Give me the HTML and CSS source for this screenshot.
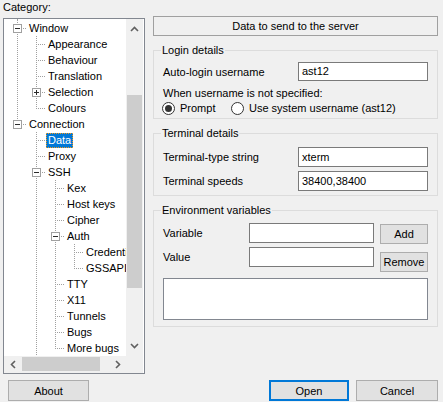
FILE: index.html
```html
<!DOCTYPE html>
<html>
<head>
<meta charset="utf-8">
<link rel="stylesheet" href="styles.css">
</head>
<body>
<div class="dialog">
  <div class="main">
    <div class="left">
      <div class="cat">Category:</div>
      <div class="tree">
        <div class="tree-top">
          <div class="rows">
            <div class="row"><span class="c t"><span class="exp minus"></span></span><span class="lbl">Window</span></div>
            <div class="row"><span class="c v"></span><span class="c t"></span><span class="lbl">Appearance</span></div>
            <div class="row"><span class="c v"></span><span class="c t"></span><span class="lbl">Behaviour</span></div>
            <div class="row"><span class="c v"></span><span class="c t"></span><span class="lbl">Translation</span></div>
            <div class="row"><span class="c v"></span><span class="c t"><span class="exp plus"></span></span><span class="lbl">Selection</span></div>
            <div class="row"><span class="c v"></span><span class="c l"></span><span class="lbl">Colours</span></div>
            <div class="row"><span class="c l"><span class="exp minus"></span></span><span class="lbl">Connection</span></div>
            <div class="row"><span class="c"></span><span class="c t"></span><span class="lbl sel">Data</span></div>
            <div class="row"><span class="c"></span><span class="c t"></span><span class="lbl">Proxy</span></div>
            <div class="row"><span class="c"></span><span class="c t"><span class="exp minus"></span></span><span class="lbl">SSH</span></div>
            <div class="row"><span class="c"></span><span class="c v"></span><span class="c t"></span><span class="lbl">Kex</span></div>
            <div class="row"><span class="c"></span><span class="c v"></span><span class="c t"></span><span class="lbl">Host keys</span></div>
            <div class="row"><span class="c"></span><span class="c v"></span><span class="c t"></span><span class="lbl">Cipher</span></div>
            <div class="row"><span class="c"></span><span class="c v"></span><span class="c t"><span class="exp minus"></span></span><span class="lbl">Auth</span></div>
            <div class="row"><span class="c"></span><span class="c v"></span><span class="c v"></span><span class="c t"></span><span class="lbl">Credentials</span></div>
            <div class="row"><span class="c"></span><span class="c v"></span><span class="c v"></span><span class="c l"></span><span class="lbl">GSSAPI</span></div>
            <div class="row"><span class="c"></span><span class="c v"></span><span class="c t"></span><span class="lbl">TTY</span></div>
            <div class="row"><span class="c"></span><span class="c v"></span><span class="c t"></span><span class="lbl">X11</span></div>
            <div class="row"><span class="c"></span><span class="c v"></span><span class="c t"></span><span class="lbl">Tunnels</span></div>
            <div class="row"><span class="c"></span><span class="c v"></span><span class="c t"></span><span class="lbl">Bugs</span></div>
            <div class="row"><span class="c"></span><span class="c v"></span><span class="c l"></span><span class="lbl">More bugs</span></div>
          </div>
          <div class="vscroll">
            <div class="sbtn"><svg width="9" height="6" viewBox="0 0 9 6"><path d="M1 5 L4.5 1.5 L8 5" fill="none" stroke="#606060" stroke-width="1.6"/></svg></div>
            <div class="vtrack"><div class="vthumb"></div></div>
            <div class="sbtn"><svg width="9" height="6" viewBox="0 0 9 6"><path d="M1 1 L4.5 4.5 L8 1" fill="none" stroke="#606060" stroke-width="1.6"/></svg></div>
          </div>
        </div>
        <div class="tree-bottom">
          <div class="hscroll">
            <div class="sbtn"><svg width="6" height="9" viewBox="0 0 6 9"><path d="M5 1 L1.5 4.5 L5 8" fill="none" stroke="#606060" stroke-width="1.6"/></svg></div>
            <div class="htrack"><div class="hthumb"></div></div>
            <div class="sbtn"><svg width="6" height="9" viewBox="0 0 6 9"><path d="M1 1 L4.5 4.5 L1 8" fill="none" stroke="#606060" stroke-width="1.6"/></svg></div>
          </div>
          <div class="corner"></div>
        </div>
      </div>
    </div>
    <div class="right">
      <div class="title">Data to send to the server</div>
      <fieldset class="group g-login">
        <legend>Login details</legend>
        <div class="frow r-auto"><span>Auto-login username</span><span class="input">ast12</span></div>
        <div class="line when">When username is not specified:</div>
        <div class="radios">
          <span class="radio r1"><span class="circ on"></span>Prompt</span>
          <span class="radio"><span class="circ"></span>Use system username (ast12)</span>
        </div>
      </fieldset>
      <fieldset class="group g-term">
        <legend>Terminal details</legend>
        <div class="frow r-t1"><span>Terminal-type string</span><span class="input h20">xterm</span></div>
        <div class="frow r-t2"><span>Terminal speeds</span><span class="input h20">38400,38400</span></div>
      </fieldset>
      <fieldset class="group g-env">
        <legend>Environment variables</legend>
        <div class="env">
          <div class="env-fields">
            <div class="frow"><span>Variable</span><span class="input h20 w125"></span></div>
            <div class="frow r-val"><span>Value</span><span class="input h20 w125"></span></div>
          </div>
          <div class="env-btns">
            <div class="btn b-add">Add</div>
            <div class="btn b-rem">Remove</div>
          </div>
        </div>
        <div class="listbox"></div>
      </fieldset>
    </div>
  </div>
  <div class="footer">
    <div class="btn b-about">About</div>
    <div class="btn b-open">Open</div>
    <div class="btn b-cancel">Cancel</div>
  </div>
</div>
</body>
</html>
```
FILE: styles.css
```css
* { box-sizing: border-box; }
html, body { margin: 0; padding: 0; }
body {
  background: #f0f0f0;
  font-family: "Liberation Sans", Arial, sans-serif;
  font-size: 11px;
  color: #000;
}
.dialog {
  width: 443px;
  height: 402px;
  display: flex;
  flex-direction: column;
  overflow: hidden;
}
.main {
  height: 380px;
  flex-shrink: 0;
  display: flex;
  padding-left: 3px;
}
.left {
  width: 142px;
  padding-top: 1px;
}
.cat {
  line-height: 13px;
  height: 13px;
}
.tree {
  margin-top: 4px;
  width: 142px;
  height: 356px;
  border: 1px solid #828790;
  background: #fff;
  display: flex;
  flex-direction: column;
}
.tree-top {
  height: 337px;
  display: flex;
}
.rows {
  width: 122px;
  overflow: hidden;
  padding: 1px 0 0 4px;
  background: repeating-linear-gradient(to bottom, #a0a0a0 0 1px, transparent 1px 2px) 13px 0 / 1px 2px no-repeat;
}
.row {
  height: 16px;
  display: flex;
  align-items: center;
  white-space: nowrap;
}
.c {
  width: 19px;
  height: 16px;
  flex-shrink: 0;
  display: flex;
  align-items: center;
  padding-left: 5px;
}
.v {
  background: repeating-linear-gradient(to bottom, #a0a0a0 0 1px, transparent 1px 2px) 9px 0 / 1px 16px no-repeat;
}
.t {
  background:
    repeating-linear-gradient(to bottom, #a0a0a0 0 1px, transparent 1px 2px) 9px 0 / 1px 16px no-repeat,
    repeating-linear-gradient(to right, #a0a0a0 0 1px, transparent 1px 2px) 11px 8px / 8px 1px no-repeat;
}
.l {
  background:
    repeating-linear-gradient(to bottom, #a0a0a0 0 1px, transparent 1px 2px) 9px 0 / 1px 9px no-repeat,
    repeating-linear-gradient(to right, #a0a0a0 0 1px, transparent 1px 2px) 11px 8px / 8px 1px no-repeat;
}
.exp {
  width: 9px;
  height: 9px;
  border: 1px solid #a0a0a0;
  background-color: #fff;
  margin-top: 1px;
}
.minus {
  background: linear-gradient(#2b2b2b, #2b2b2b) center / 5px 1px no-repeat, #fff;
}
.plus {
  background:
    linear-gradient(#2b2b2b, #2b2b2b) center / 5px 1px no-repeat,
    linear-gradient(#2b2b2b, #2b2b2b) center / 1px 5px no-repeat, #fff;
}
.lbl {
  padding: 0 2px;
  line-height: 14px;
  height: 15px;
}
.sel {
  background: #0078d7;
  color: #fff;
  outline: 1px dotted #f39a1e;
  outline-offset: -1px;
}
.vscroll {
  width: 17px;
  background: #f0f0f0;
  display: flex;
  flex-direction: column;
}
.sbtn {
  width: 17px;
  height: 17px;
  flex-shrink: 0;
  display: flex;
  align-items: center;
  justify-content: center;
}
.vscroll .sbtn:first-child { padding-top: 2px; }
.vscroll .sbtn:last-child { padding-bottom: 4px; }
.vtrack { flex: 1; }
.vthumb {
  margin: 59px 0 0 1px;
  width: 15px;
  height: 193px;
  background: #cdcdcd;
}
.tree-bottom {
  height: 17px;
  display: flex;
}
.hscroll {
  width: 122px;
  display: flex;
  background: #f0f0f0;
}
.htrack { flex: 1; }
.hthumb {
  margin: 1px 0 0 1px;
  width: 78px;
  height: 14px;
  background: #cdcdcd;
}
.corner {
  width: 17px;
  background: #f0f0f0;
}
.right {
  margin-left: 8px;
  width: 285px;
  padding-top: 16px;
}
.title {
  height: 20px;
  border: 1px solid #a0a0a0;
  text-align: center;
  line-height: 18px;
}
.group {
  margin: 8px 0 0;
  padding: 0 9px 3px;
  border: 1px solid #dcdcdc;
  min-width: 0;
}
.group legend {
  padding: 0 1px;
  margin-left: -2px;
  line-height: 13px;
  height: 13px;
}
.g-term { padding-bottom: 4px; }
.g-env { padding-bottom: 6px; }
.frow {
  display: flex;
  align-items: center;
  justify-content: space-between;
}
.r-auto { margin-top: 5px; }
.input {
  width: 130px;
  height: 19px;
  border: 1px solid #7a7a7a;
  background: #fff;
  padding: 0 3px;
  line-height: 17px;
}
.h20 { height: 20px; line-height: 18px; }
.w125 { width: 125px; }
.line { line-height: 13px; }
.when { margin-top: 6px; }
.radios {
  margin-top: 1px;
  height: 14px;
  display: flex;
  align-items: center;
  margin-left: -1px;
}
.radio {
  display: flex;
  align-items: center;
  line-height: 13px;
}
.r1 { width: 69px; }
.circ {
  width: 13px;
  height: 13px;
  border: 1px solid #333;
  border-radius: 50%;
  background: #fff;
  margin-right: 5px;
  display: flex;
  align-items: center;
  justify-content: center;
}
.circ.on::before {
  content: "";
  width: 7px;
  height: 7px;
  border-radius: 50%;
  background: #333;
}
.r-t1 { margin-top: 7px; }
.r-t2 { margin-top: 4px; }
.env {
  margin-top: 6px;
  display: flex;
  height: 49px;
}
.env-fields { flex: 1; }
.r-val { margin-top: 4px; }
.env-btns {
  width: 48px;
  margin-left: 6px;
}
.btn {
  background: #e1e1e1;
  border: 1px solid #adadad;
  text-align: center;
  display: flex;
  align-items: center;
  justify-content: center;
}
.b-add { height: 20px; margin-top: 1px; }
.b-rem { height: 20px; margin-top: 8px; }
.listbox {
  margin-top: 6px;
  height: 42px;
  background: #fff;
  border: 1px solid #828790;
}
.footer {
  display: flex;
  padding: 0 5px 0 8px;
}
.footer .btn { height: 21px; }
.b-about { width: 81px; }
.b-open {
  width: 80px;
  margin-left: auto;
  border: 2px solid #0078d7;
}
.b-cancel {
  width: 82px;
  margin-left: 7px;
}
```
